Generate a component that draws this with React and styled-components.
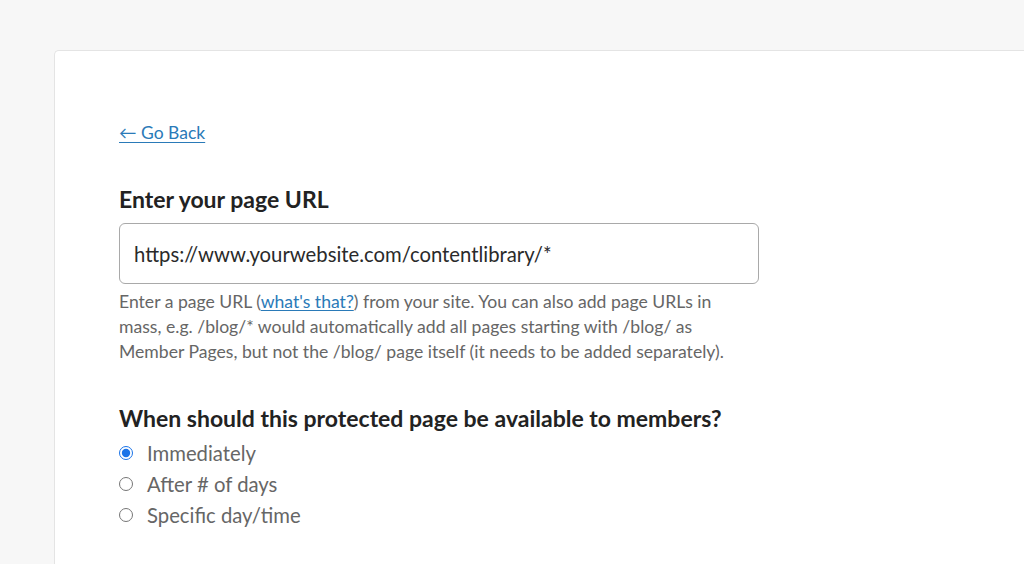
import React, { useState } from 'react';
import styled, { createGlobalStyle } from 'styled-components';

const GlobalStyle = createGlobalStyle`
  html, body {
    margin: 0;
    padding: 0;
    background: #f7f7f7;
    font-family: Lato, "Open Sans", sans-serif;
    overflow: hidden;
  }
`;

const Page = styled.div`
  height: 564px;
  padding: 50px 0 0 54px;
  box-sizing: border-box;
  overflow: hidden;
`;

const Card = styled.div`
  background: #fff;
  border: 1px solid #e4e4e4;
  border-right: none;
  border-bottom: none;
  border-radius: 5px 0 0 0;
  height: 520px;
  padding: 70px 0 0 64px;
  box-sizing: border-box;
`;

const BackLink = styled.a`
  display: inline-block;
  font-size: 17.5px;
  line-height: 24px;
  color: #2a7ab8;
  text-decoration: underline;
  text-underline-offset: 3px;
  text-decoration-thickness: 1px;
`;

const Section = styled.div`
  width: 640px;
  margin-top: ${p => p.$top}px;
`;

const Label = styled.h2`
  margin: 0 0 ${p => p.$gap}px;
  font-size: 23px;
  line-height: 28px;
  font-weight: 700;
  color: #222;
`;

const UrlInput = styled.input`
  display: block;
  width: 100%;
  height: 61px;
  box-sizing: border-box;
  border: 1px solid #a9a9a9;
  border-radius: 6px;
  padding: 0 14px;
  font-family: inherit;
  font-size: 20.3px;
  color: #2a2a2a;
  outline: none;
`;

const Help = styled.p`
  margin: 5px 0 0;
  font-size: 17.6px;
  line-height: 25px;
  color: #666;
  white-space: nowrap;

  a {
    color: #2a7ab8;
    text-underline-offset: 2px;
  }
`;

const Options = styled.div`
  display: flex;
  flex-direction: column;
  gap: 7px;
`;

const Option = styled.label`
  display: flex;
  align-items: center;
  gap: 14px;
  font-size: 20.3px;
  line-height: 24px;
  color: #666;
  cursor: pointer;

  input {
    margin: 0;
    width: 14px;
    height: 14px;
    accent-color: #1a73e8;
  }
`;

const choices = ['Immediately', 'After # of days', 'Specific day/time'];

export default function App() {
  const [when, setWhen] = useState(choices[0]);
  return (
    <>
      <GlobalStyle />
      <Page>
        <Card>
          <BackLink href="#">← Go Back</BackLink>
          <Section $top={40}>
            <Label $gap={10}>Enter your page URL</Label>
            <UrlInput defaultValue="https://www.yourwebsite.com/contentlibrary/*" />
            <Help>
              Enter a page URL (<a href="#">what's that?</a>) from your site. You can also add page URLs in
              <br />
              mass, e.g. /blog/* would automatically add all pages starting with /blog/ as
              <br />
              Member Pages, but not the /blog/ page itself (it needs to be added separately).
            </Help>
          </Section>
          <Section $top={40}>
            <Label $gap={9}>When should this protected page be available to members?</Label>
            <Options>
              {choices.map(c => (
                <Option key={c}>
                  <input
                    type="radio"
                    name="when"
                    checked={when === c}
                    onChange={() => setWhen(c)}
                  />
                  {c}
                </Option>
              ))}
            </Options>
          </Section>
        </Card>
      </Page>
    </>
  );
}
